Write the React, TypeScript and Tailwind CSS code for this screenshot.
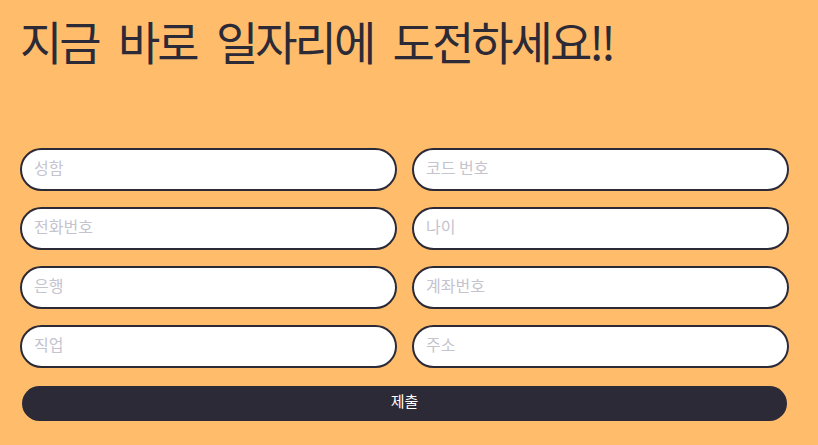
import React from "react";

const fields = [
  ["성함", "코드 번호"],
  ["전화번호", "나이"],
  ["은행", "계좌번호"],
  ["직업", "주소"],
];

export default function App() {
  return (
    <div
      className="min-h-[445px] w-full bg-[#ffbd6c] px-[20px] pt-[6px]"
      style={{ fontFamily: '"Noto Sans CJK KR", "Noto Sans", sans-serif' }}
    >
      <h1 className="text-[46px] leading-[68px] tracking-[-0.065em] [word-spacing:12px] text-[#2d2a37] font-normal whitespace-nowrap">
        지금 바로 일자리에 도전하세요!!
      </h1>
      <form className="mt-[74px] flex w-[769px] flex-col gap-[16px]">
        {fields.map((row, i) => (
          <div key={i} className="grid grid-cols-2 gap-[15px]">
            {row.map((p) => (
              <input
                key={p}
                placeholder={p}
                className="h-[43px] w-full rounded-full border-2 border-[#2d2a37] bg-white px-[12px] pb-[6px] text-[16px] text-[#2d2a37] outline-none placeholder:text-[#c5c3ce]"
              />
            ))}
          </div>
        ))}
        <button
          type="button"
          className="mx-[2px] mt-[2px] h-[35px] rounded-full bg-[#2d2a37] pb-[5px] text-[15px] text-white"
        >
          제출
        </button>
      </form>
    </div>
  );
}
